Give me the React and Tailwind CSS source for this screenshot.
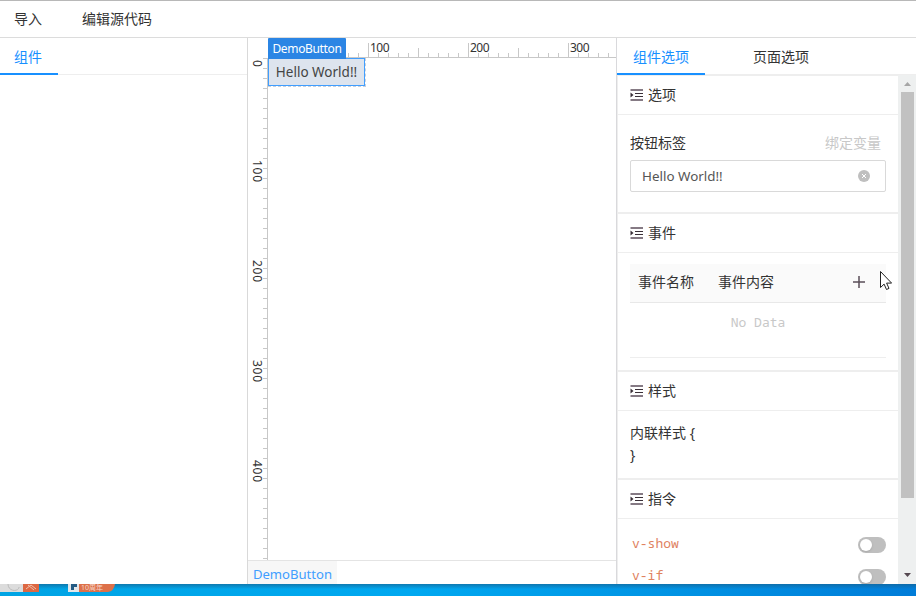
import React from "react";

const range = (n) => Array.from({ length: n }, (_, i) => i);

function HorizontalRuler() {
  return (
    <svg className="block h-5 w-[349px] shrink-0" viewBox="0 0 349 20" shapeRendering="crispEdges">
      <rect x="0" y="19" width="349" height="1" fill="#c8c8c8" />
      {range(35).map((i) => {
        const h = i % 10 === 0 ? 14 : i % 5 === 0 ? 9 : 4;
        return <rect key={i} x={i * 10} y={19 - h} width="1" height={h} fill="#c8c8c8" />;
      })}
      {[100, 200, 300].map((n) => (
        <text key={n} x={n + 2} y="14" fontSize="12" fill="#333" textLength="19.5">{n}</text>
      ))}
    </svg>
  );
}

function VerticalRuler() {
  return (
    <svg className="block h-[502px] w-5 shrink-0" viewBox="0 0 20 502" shapeRendering="crispEdges">
      <rect x="19" y="0" width="1" height="502" fill="#c8c8c8" />
      {range(51).map((i) => (
        <rect key={i} x="15" y={i * 10} width="4" height="1" fill="#c8c8c8" />
      ))}
      {[0, 100, 200, 300, 400].map((n) => (
        <text key={n} transform={`translate(5 ${n + 2}) rotate(90)`} fontSize="12" fill="#333" textLength={n ? 22 : 7}>{n}</text>
      ))}
    </svg>
  );
}

function IndentIcon() {
  return (
    <svg className="mr-1 h-3 w-[14px]" viewBox="0 0 14 12">
      <g fill="#857a84">
        <rect x="0.5" y="0" width="12.5" height="2" />
        <rect x="0.5" y="10" width="12.5" height="2" />
      </g>
      <g fill="#3a3038">
        <rect x="5" y="4" width="8" height="1" />
        <rect x="5" y="7" width="8" height="1" />
        <path d="M0.5 3.5L3.5 6L0.5 8.5z" />
      </g>
    </svg>
  );
}

function Section({ title, className, children }) {
  return (
    <section className={`flex shrink-0 flex-col border-b-2 border-[#eeeeee] ${className}`}>
      <h2 className="flex h-[39px] shrink-0 items-center border-b border-[#eeeeee] pl-3 text-sm font-normal">
        <IndentIcon />
        {title}
      </h2>
      {children}
    </section>
  );
}

function Directive({ name }) {
  return (
    <div className="flex h-8 items-center justify-between pl-[14px] pr-3">
      <span className="pb-[2px] font-['Noto_Sans_Mono','DejaVu_Sans_Mono',monospace] text-[13px] leading-4 text-[#e0825f]">{name}</span>
      <span className="mt-[2px] flex h-4 w-7 items-center rounded-full bg-[#bfbfbf] pl-[2px]">
        <span className="h-3 w-3 rounded-full bg-white shadow-sm" />
      </span>
    </div>
  );
}

export default function App() {
  return (
    <div className="relative flex h-[596px] w-[916px] flex-col overflow-hidden bg-white font-['Noto_Sans','Noto_Sans_CJK_SC',sans-serif] text-sm text-[#333]">
      <header className="flex h-[38px] shrink-0 items-center gap-10 border-b border-t border-b-[#dcdcdc] border-t-[#b8b8b8] pl-[14px]">
        <span>导入</span>
        <span>编辑源代码</span>
      </header>

      <div className="flex h-[546px] shrink-0">
        <aside className="w-[248px] shrink-0 border-r border-[#d9d9d9]">
          <div className="flex h-[37px] border-b border-[#eeeeee]">
            <span className="flex h-[37px] w-[58px] items-center justify-center border-b-2 border-[#1890ff] pr-[2px] pt-[2px] text-[#1890ff]">组件</span>
          </div>
        </aside>

        <main className="flex w-[368px] shrink-0 flex-col overflow-hidden">
          <div className="relative flex h-5 shrink-0 pl-5">
            <HorizontalRuler />
            <span className="absolute left-5 top-0 flex h-[21px] w-[78px] items-center justify-center rounded-t-[1px] bg-[#2b85e4] pt-px text-xs tracking-[-0.35px] text-white">DemoButton</span>
          </div>
          <div className="flex h-[502px] shrink-0">
            <VerticalRuler />
            <div className="grid h-[29px] w-[98px] border-b border-r border-dashed border-[#c8d0dc]">
              <div className="flex h-7 items-center justify-center whitespace-nowrap border border-[#409eff] bg-[#dde4ee] pt-[2px] text-[13.5px] text-[#444]">Hello World!!</div>
            </div>
          </div>
          <div className="flex h-6 shrink-0 border-t border-[#e4e4e4]">
            <span className="flex h-[26px] w-[89px] items-center justify-center bg-[#f7f7f7] text-[13.1px] text-[#409eff]">DemoButton</span>
          </div>
        </main>

        <aside className="flex w-[300px] shrink-0 flex-col border-l border-[#d9d9dc]">
          <nav className="flex h-[37px] shrink-0">
            <span className="flex w-[88px] items-center justify-center border-b-2 border-[#1890ff] pt-[2px] text-[#1890ff]">组件选项</span>
            <span className="flex grow items-center border-b border-[#eeeeee] pl-12 pt-px">页面选项</span>
          </nav>
          <div className="flex h-[509px]">
            <div className="flex w-[281px] shrink-0 flex-col overflow-hidden border-l border-t border-[#eeeeee]">
              <Section title="选项" className="h-[138px]">
                <div className="flex flex-col pl-3 pr-3 pt-[17px]">
                  <div className="flex h-[21px] items-center justify-between pr-[5px]">
                    <span>按钮标签</span>
                    <span className="text-[#c8c8c8]">绑定变量</span>
                  </div>
                  <div className="mt-[7px] flex h-8 items-center justify-between rounded-[2px] border border-[#d9d9d9] pl-[11px] pr-[15px]">
                    <span className="pt-[2px] text-[13.4px] text-[#555]">Hello World!!</span>
                    <svg className="h-3 w-3" viewBox="0 0 12 12">
                      <circle cx="6" cy="6" r="6" fill="#bfbfbf" />
                      <path d="M4 4l4 4M8 4l-4 4" stroke="white" strokeWidth="1" />
                    </svg>
                  </div>
                </div>
              </Section>

              <Section title="事件" className="h-[158px]">
                <div className="mx-3 mt-[11px] flex h-[94px] flex-col border-b border-[#eeeeee]">
                  <div className="flex h-[39px] shrink-0 items-center border-b border-[#e8e8e8] bg-[#fafafa] pb-[2px] pl-2 pr-[21px]">
                    <span className="w-20">事件名称</span>
                    <span className="grow">事件内容</span>
                    <svg className="h-[12px] w-[12px]" viewBox="0 0 12 12">
                      <path d="M0 6h12M6 0v12" stroke="#5a4e58" strokeWidth="1.5" />
                    </svg>
                  </div>
                  <p className="pt-[11px] text-center font-['Noto_Sans_Mono','DejaVu_Sans_Mono',monospace] text-[13px] leading-4 text-[#c8c8c8]">No Data</p>
                </div>
              </Section>

              <Section title="样式" className="h-[108px]">
                <div className="pl-3 pt-[11px] leading-[22px]">
                  <p>内联样式 {"{"}</p>
                  <p>{"}"}</p>
                </div>
              </Section>

              <Section title="指令" className="h-[140px]">
                <div className="pt-[9px]">
                  <Directive name="v-show" />
                  <Directive name="v-if" />
                </div>
              </Section>
            </div>

            <div className="flex w-[18px] shrink-0 flex-col items-center justify-between bg-[#eef0f0] pl-[1px]">
              <svg className="h-[17px] w-[7px] shrink-0" viewBox="0 0 7 17">
                <path d="M0 11L3.5 7L7 11z" fill="#a6a6a6" />
              </svg>
              <div className="mb-auto h-[406px] w-[13px] bg-[#c1c1c1]" />
              <svg className="h-[17px] w-[7px] shrink-0" viewBox="0 0 7 17">
                <path d="M0 6L3.5 10L7 6z" fill="#554850" />
              </svg>
            </div>
          </div>
        </aside>
      </div>

      <footer className="h-3 shrink-0">
        <svg className="block h-3 w-[916px]" viewBox="0 0 916 12">
          <defs>
            <linearGradient id="bar">
              <stop offset="0" stopColor="#00a4e4" />
              <stop offset="0.45" stopColor="#00a8f0" />
              <stop offset="0.72" stopColor="#0094e4" />
              <stop offset="1" stopColor="#007cd8" />
            </linearGradient>
            <linearGradient id="edge" x1="0" y1="0" x2="0" y2="1">
              <stop offset="0" stopColor="#17618f" stopOpacity="0.65" />
              <stop offset="1" stopColor="#17618f" stopOpacity="0" />
            </linearGradient>
          </defs>
          <rect width="916" height="12" fill="url(#bar)" />
          <rect width="916" height="5" fill="url(#edge)" />
          <rect width="23" height="8" fill="#dcdcdc" />
          <path d="M8 0c0 8 11 8 11 3" fill="none" stroke="#bbb" />
          <rect x="23" width="16" height="8" fill="#dd6843" />
          <path d="M26 5l5-4 5 4M28 1l6 5" fill="none" stroke="#efc1ae" />
          <rect x="68" width="11" height="8" fill="#e4e7ea" />
          <path d="M71 0h6v3h-3v3h-3z" fill="#245b84" />
          <path d="M79 0h36q-1 7-7 8H79z" fill="#dd7049" />
          <text x="81" y="6" fontSize="7" fill="#f6d6c9">10周年</text>
        </svg>
      </footer>

      <svg className="absolute left-[880px] top-[271px] h-5 w-3" viewBox="0 0 12 20">
        <path d="M.5.5v16l3.6-3.4 2.4 5.4 2.5-1.1-2.4-5.3h5z" fill="white" stroke="#222" />
      </svg>
    </div>
  );
}
